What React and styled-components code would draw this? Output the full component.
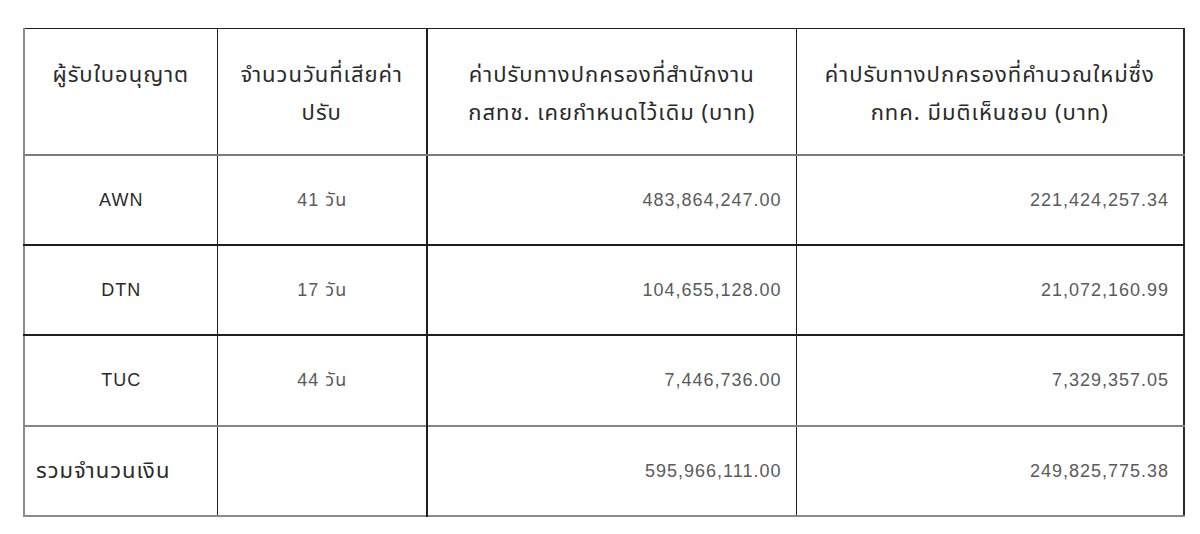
import React from "react";
import styled, { createGlobalStyle } from "styled-components";

const GlobalStyle = createGlobalStyle`
  html, body {
    margin: 0;
    padding: 0;
    background: #ffffff;
  }
  body {
    font-family: "Liberation Sans", Arial, sans-serif;
  }
`;

const Page = styled.div`
  padding: 28px 0 0 23px;
`;

const Table = styled.table`
  border-collapse: collapse;
  table-layout: fixed;
  width: 1160px;
  border-top: 1px solid #1e1e1e;
  border-left: 2px solid #8c8c8c;
  border-right: 2px solid #2a2a2a;
  border-bottom: 2px solid #8a8a8a;
`;

const thaiStack = 'Tahoma, "Noto Sans Thai", "Noto Sans", "DejaVu Sans", sans-serif';

const HeadCell = styled.th`
  height: 97px;
  padding: 28px 4px 0;
  vertical-align: top;
  text-align: center;
  font-family: ${thaiStack};
  font-size: 22px;
  letter-spacing: 1px;
  font-weight: normal;
  line-height: 38px;
  color: #2a2a2a;
  border-right: ${({ $thick }) => ($thick ? "2px" : "1px")} solid #1e1e1e;
  border-bottom: 2px solid #7c7c7c;
  &:last-child {
    border-right: none;
  }
`;

const Cell = styled.td`
  height: ${({ $h }) => $h || 88}px;
  padding: ${({ $align }) => ($align === "right" ? "0 14px 0 10px" : "0 10px 0 11px")};
  vertical-align: middle;
  text-align: ${({ $align }) => $align || "center"};
  font-family: ${({ $thai }) =>
    $thai ? thaiStack : '"Liberation Sans", Arial, "Noto Sans Thai", sans-serif'};
  font-size: ${({ $thai }) => ($thai ? 22 : 18)}px;
  letter-spacing: 1px;
  color: ${({ $strong }) => ($strong ? "#2a2a2a" : "#5a5a5a")};
  border-right: ${({ $thick }) => ($thick ? "2px" : "1px")} solid #1e1e1e;
  &:last-child {
    border-right: none;
  }
`;

const Row = styled.tr`
  border-bottom: 2px solid ${({ $soft }) => ($soft ? "#858585" : "#1e1e1e")};
  &:last-child {
    border-bottom: none;
  }
`;

const rows = [
  { name: "AWN", days: "41 วัน", old: "483,864,247.00", next: "221,424,257.34", h: 88 },
  { name: "DTN", days: "17 วัน", old: "104,655,128.00", next: "21,072,160.99", h: 87 },
  { name: "TUC", days: "44 วัน", old: "7,446,736.00", next: "7,329,357.05", h: 89, soft: true },
];

export default function App() {
  return (
    <>
      <GlobalStyle />
      <Page>
        <Table>
          <colgroup>
            <col style={{ width: 193 }} />
            <col style={{ width: 210 }} />
            <col style={{ width: 369 }} />
            <col style={{ width: 388 }} />
          </colgroup>
          <thead>
            <tr>
              <HeadCell>ผู้รับใบอนุญาต</HeadCell>
              <HeadCell $thick>
                จำนวนวันที่เสียค่า
                <br />
                ปรับ
              </HeadCell>
              <HeadCell>
                ค่าปรับทางปกครองที่สำนักงาน
                <br />
                กสทช. เคยกำหนดไว้เดิม (บาท)
              </HeadCell>
              <HeadCell>
                ค่าปรับทางปกครองที่คำนวณใหม่ซึ่ง
                <br />
                กทค. มีมติเห็นชอบ (บาท)
              </HeadCell>
            </tr>
          </thead>
          <tbody>
            {rows.map((r) => (
              <Row key={r.name} $soft={r.soft}>
                <Cell $h={r.h} $strong>
                  {r.name}
                </Cell>
                <Cell $thick>{r.days}</Cell>
                <Cell $align="right">{r.old}</Cell>
                <Cell $align="right">{r.next}</Cell>
              </Row>
            ))}
            <Row>
              <Cell $h={87} $align="left" $thai $strong>
                รวมจำนวนเงิน
              </Cell>
              <Cell $thick />
              <Cell $align="right">595,966,111.00</Cell>
              <Cell $align="right">249,825,775.38</Cell>
            </Row>
          </tbody>
        </Table>
      </Page>
    </>
  );
}
